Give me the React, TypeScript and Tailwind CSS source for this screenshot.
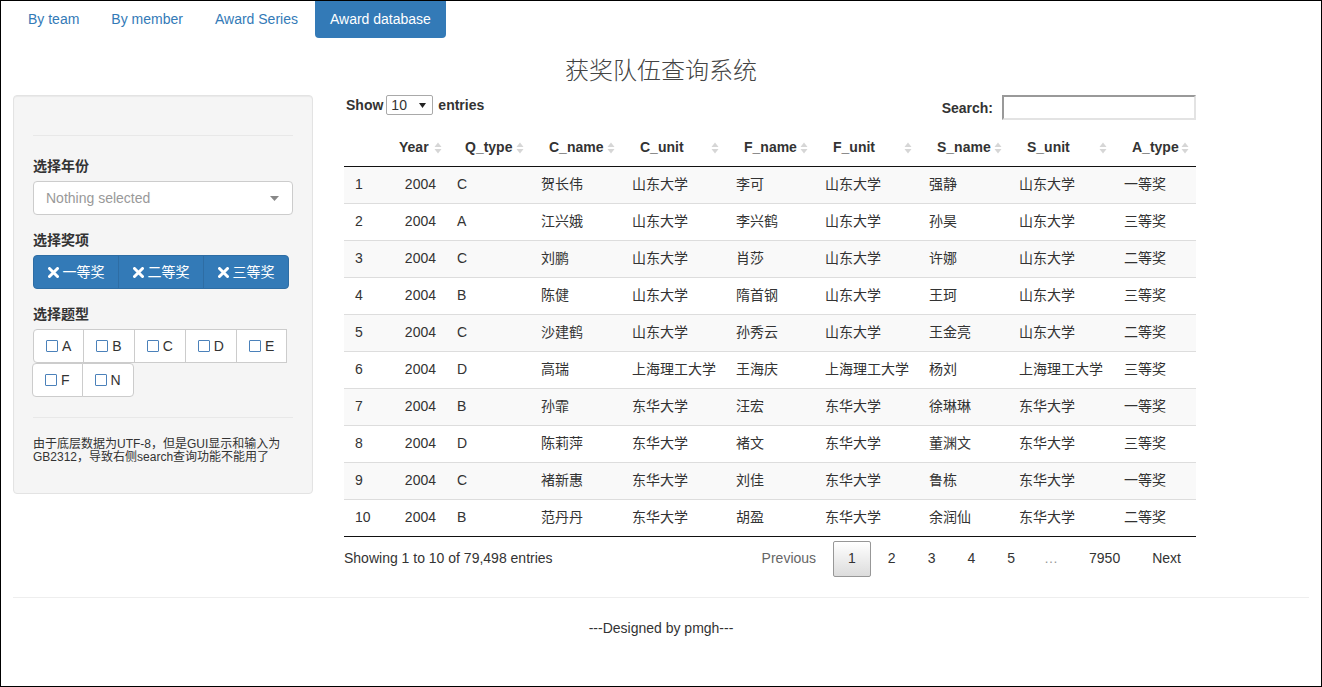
import React from "react";

const FONT = "font-['Liberation_Sans','Noto_Sans_CJK_SC',sans-serif]";

interface Row {
  id: number;
  year: string;
  qType: string;
  cName: string;
  cUnit: string;
  fName: string;
  fUnit: string;
  sName: string;
  sUnit: string;
  aType: string;
}

const rows: Row[] = [
  { id: 1, year: "2004", qType: "C", cName: "贺长伟", cUnit: "山东大学", fName: "李可", fUnit: "山东大学", sName: "强静", sUnit: "山东大学", aType: "一等奖" },
  { id: 2, year: "2004", qType: "A", cName: "江兴娥", cUnit: "山东大学", fName: "李兴鹤", fUnit: "山东大学", sName: "孙昊", sUnit: "山东大学", aType: "三等奖" },
  { id: 3, year: "2004", qType: "C", cName: "刘鹏", cUnit: "山东大学", fName: "肖莎", fUnit: "山东大学", sName: "许娜", sUnit: "山东大学", aType: "二等奖" },
  { id: 4, year: "2004", qType: "B", cName: "陈健", cUnit: "山东大学", fName: "隋首钢", fUnit: "山东大学", sName: "王珂", sUnit: "山东大学", aType: "三等奖" },
  { id: 5, year: "2004", qType: "C", cName: "沙建鹤", cUnit: "山东大学", fName: "孙秀云", fUnit: "山东大学", sName: "王金亮", sUnit: "山东大学", aType: "二等奖" },
  { id: 6, year: "2004", qType: "D", cName: "高瑞", cUnit: "上海理工大学", fName: "王海庆", fUnit: "上海理工大学", sName: "杨刘", sUnit: "上海理工大学", aType: "三等奖" },
  { id: 7, year: "2004", qType: "B", cName: "孙霏", cUnit: "东华大学", fName: "汪宏", fUnit: "东华大学", sName: "徐琳琳", sUnit: "东华大学", aType: "一等奖" },
  { id: 8, year: "2004", qType: "D", cName: "陈莉萍", cUnit: "东华大学", fName: "褚文", fUnit: "东华大学", sName: "董渊文", sUnit: "东华大学", aType: "三等奖" },
  { id: 9, year: "2004", qType: "C", cName: "褚新惠", cUnit: "东华大学", fName: "刘佳", fUnit: "东华大学", sName: "鲁栋", sUnit: "东华大学", aType: "一等奖" },
  { id: 10, year: "2004", qType: "B", cName: "范丹丹", cUnit: "东华大学", fName: "胡盈", fUnit: "东华大学", sName: "余润仙", sUnit: "东华大学", aType: "二等奖" },
];

const columns = [
  { title: "", width: "w-[45px]" },
  { title: "Year", width: "w-[58px]" },
  { title: "Q_type", width: "w-[84px]" },
  { title: "C_name", width: "w-[91px]" },
  { title: "C_unit", width: "w-[104px]" },
  { title: "F_name", width: "w-[89px]" },
  { title: "F_unit", width: "w-[104px]" },
  { title: "S_name", width: "w-[90px]" },
  { title: "S_unit", width: "w-[105px]" },
  { title: "A_type", width: "w-[82px]" },
];

const SortIcon = () => (
  <svg width="8" height="14" viewBox="0 0 8 14" className="shrink-0">
    <polygon points="0.5,6 4,1.5 7.5,6" fill="#d6d6d6" />
    <polygon points="0.5,8 4,12.5 7.5,8" fill="#d6d6d6" />
  </svg>
);

const RemoveIcon = () => (
  <svg width="11" height="11" viewBox="0 0 11 11" className="shrink-0">
    <path d="M1.5 1.5 L9.5 9.5 M9.5 1.5 L1.5 9.5" stroke="white" strokeWidth="3" strokeLinecap="round" />
  </svg>
);

const tabs = ["By team", "By member", "Award Series", "Award database"];
const letters = ["A", "B", "C", "D", "E", "F", "N"];
const awards = ["一等奖", "二等奖", "三等奖"];

export default function App() {
  return (
    <div className={`${FONT} w-[1322px] h-[687px] border border-black bg-white text-[14px] text-[#333] overflow-hidden`}>
      {/* Tabs */}
      <div className="flex pl-[12px] h-[37px]">
        {tabs.map((t, i) => (
          <div
            key={t}
            className={`h-[37px] px-[15px] flex items-center ${i > 0 ? "ml-[2px]" : ""} ${
              i === 3 ? "bg-[#337ab7] text-white rounded-b-[4px]" : "text-[#337ab7]"
            }`}
          >
            {t}
          </div>
        ))}
      </div>

      {/* Title */}
      <h2 className="mt-[20px] h-[26px] leading-[26px] text-center text-[24px] font-light text-[#444]">获奖队伍查询系统</h2>

      <div className="flex items-start mt-[11px] pl-[12px]">
        {/* Sidebar */}
        <div className="w-[300px] bg-[#f5f5f5] border border-[#e3e3e3] rounded-[4px] shadow-[inset_0_1px_1px_rgba(0,0,0,0.05)] px-[19px] pt-[19px] pb-[19px]">
          <div className="border-t border-[#e8e8e8] mt-[20px] mb-[20px]" />
          <div className="font-bold leading-[20px] mb-[5px]">选择年份</div>
          <div className="h-[34px] bg-white border border-[#ccc] rounded-[4px] flex items-center justify-between pl-[12px] pr-[13px]">
            <span className="text-[#999]">Nothing selected</span>
            <svg width="9" height="5" viewBox="0 0 9 5">
              <polygon points="0,0 9,0 4.5,5" fill="#888" />
            </svg>
          </div>
          <div className="font-bold leading-[20px] mt-[15px] mb-[5px]">选择奖项</div>
          <div className="flex">
            {awards.map((a, i) => (
              <div
                key={a}
                className={`w-[86px] h-[34px] flex items-center justify-center gap-[4px] bg-[#337ab7] border border-[#2e6da4] text-white ${
                  i > 0 ? "-ml-px" : ""
                } ${i === 0 ? "rounded-l-[4px]" : ""} ${i === 2 ? "rounded-r-[4px]" : ""}`}
              >
                <RemoveIcon />
                <span>{a}</span>
              </div>
            ))}
          </div>
          <div className="font-bold leading-[20px] mt-[15px] mb-[5px]">选择题型</div>
          <div className="flex flex-wrap w-[256px]">
            {letters.map((l, i) => (
              <div
                key={l}
                className={`h-[34px] px-[12px] flex items-center gap-[4px] bg-white border border-[#ccc] ${i > 0 ? "-ml-px" : ""} ${
                  i === 0 ? "rounded-l-[4px]" : ""
                } ${i === letters.length - 1 ? "rounded-r-[4px]" : ""} ${i === 5 ? "rounded-l-[4px]" : ""}`}
              >
                <span className="w-[12px] h-[12px] border-[1.5px] border-[#4b81ba] rounded-[1px]" />
                <span className="text-[#333]">{l}</span>
              </div>
            ))}
          </div>
          <div className="border-t border-[#e8e8e8] mt-[20px] mb-[20px]" />
          <p className="text-[12px] leading-[13px] mb-[10px]">
            由于底层数据为UTF-8，但是GUI显示和输入为
            <br />
            GB2312，导致右侧search查询功能不能用了
          </p>
        </div>

        {/* Main */}
        <div className="w-[852px] ml-[31px]">
          <div className="flex justify-between items-start">
            <div className="flex items-center h-[20px] font-bold">
              <span className="ml-[2px]">Show</span>
              <div className="ml-[3px] w-[47px] h-[20px] border border-[#a9a9a9] rounded-[2px] bg-white flex items-center justify-between pl-[4px] pr-[6px] font-normal">
                <span>10</span>
                <svg width="7" height="5" viewBox="0 0 7 5">
                  <polygon points="0,0 7,0 3.5,5" fill="#222" />
                </svg>
              </div>
              <span className="ml-[5px]">entries</span>
            </div>
            <div className="flex items-center font-bold">
              <span className="mt-[2px]">Search:</span>
              <div className="ml-[9px] w-[194px] h-[25px] bg-white border-2 border-t-[#999] border-l-[#999] border-r-[#e3e3e3] border-b-[#e3e3e3]" />
            </div>
          </div>

          <table className="table-fixed w-[852px] mt-[10px] border-collapse border-b border-[#111]">
            <colgroup>
              {columns.map((c, i) => (
                <col key={i} className={c.width} />
              ))}
            </colgroup>
            <thead>
              <tr className="border-b border-[#111]">
                {columns.map((c, i) => (
                  <th key={i} className="h-[36px] p-0 font-bold text-left">
                    {c.title && (
                      <div className={`flex items-center ${i === 1 ? "pl-[10px] gap-[5px]" : "pl-[18px] pr-[7px] justify-between"}`}>
                        <span>{c.title}</span>
                        <SortIcon />
                      </div>
                    )}
                  </th>
                ))}
              </tr>
            </thead>
            <tbody>
              {rows.map((r, i) => (
                <tr key={r.id} className={`${i % 2 === 0 ? "bg-[#f9f9f9]" : "bg-white"} ${i > 0 ? "border-t border-[#ddd]" : ""}`}>
                  <td className="h-[37px] pl-[11px]">{r.id}</td>
                  <td className="h-[37px] pr-[11px] text-right">{r.year}</td>
                  <td className="h-[37px] pl-[10px]">{r.qType}</td>
                  <td className="h-[37px] pl-[10px]">{r.cName}</td>
                  <td className="h-[37px] pl-[10px]">{r.cUnit}</td>
                  <td className="h-[37px] pl-[10px]">{r.fName}</td>
                  <td className="h-[37px] pl-[10px]">{r.fUnit}</td>
                  <td className="h-[37px] pl-[10px]">{r.sName}</td>
                  <td className="h-[37px] pl-[10px]">{r.sUnit}</td>
                  <td className="h-[37px] pl-[10px]">{r.aType}</td>
                </tr>
              ))}
            </tbody>
          </table>

          <div className="flex justify-between items-start">
            <div className="pt-[11px] leading-[20px]">Showing 1 to 10 of 79,498 entries</div>
            <div className="flex pt-[4px]">
              <div className="h-[36px] px-[14px] flex items-center border border-transparent text-[#666]">Previous</div>
              <div className="ml-[2px] h-[36px] min-w-[36px] px-[14px] flex items-center justify-center border border-[#979797] rounded-[2px] bg-gradient-to-b from-white to-[#dcdcdc]">
                1
              </div>
              {["2", "3", "4", "5"].map((p) => (
                <div key={p} className="ml-[2px] h-[36px] px-[14px] flex items-center justify-center border border-transparent">
                  {p}
                </div>
              ))}
              <div className="h-[36px] px-[14px] flex items-center text-[#999]">…</div>
              <div className="ml-[2px] h-[36px] px-[14px] flex items-center border border-transparent">7950</div>
              <div className="ml-[2px] h-[36px] px-[14px] flex items-center border border-transparent">Next</div>
            </div>
          </div>
        </div>
      </div>

      {/* Footer */}
      <div className="mx-[12px] mt-[20px] border-t border-[#eee] w-[1296px]" />
      <div className="mt-[20px] leading-[20px] text-center">---Designed by pmgh---</div>
    </div>
  );
}
